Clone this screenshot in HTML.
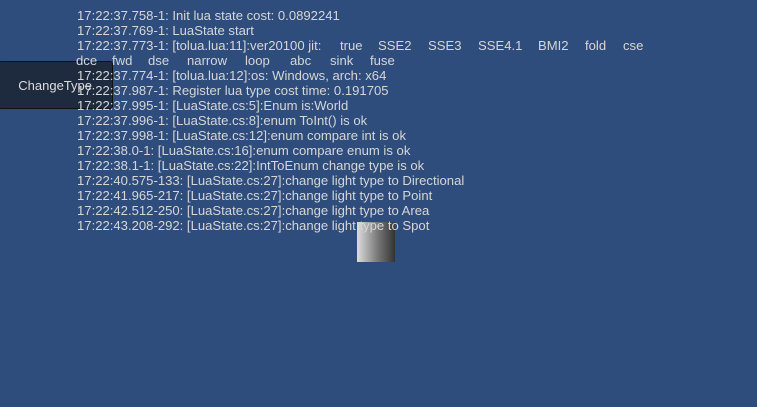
<!DOCTYPE html>
<html><head><style>
body{margin:0;width:757px;height:407px;background:#2e4d7c;overflow:hidden;position:relative;font-family:"Liberation Sans",sans-serif;}
.btn{position:absolute;left:-2px;top:61px;width:115px;height:48px;background:rgba(25,30,40,0.72);border:1px solid #111;border-radius:3px;color:#ddd;font-size:13px;line-height:48px;text-align:right;box-sizing:border-box;padding-right:20px}
.cube{position:absolute;left:357px;top:222px;width:38px;height:40px;background:linear-gradient(90deg,#ddd,#777 55%,#333)}
.log{position:absolute;left:77px;top:8px;color:#d6d6d6;font-size:13.1px;line-height:15px;white-space:pre}
.w{position:absolute;color:#d6d6d6;font-size:13.1px;line-height:15px}
</style></head><body>
<div class="btn">ChangeType</div>
<div class="cube"></div>
<div class="log">17:22:37.758-1: Init lua state cost: 0.0892241
17:22:37.769-1: LuaState start
17:22:37.773-1: [tolua.lua:11]:ver20100 jit:

17:22:37.774-1: [tolua.lua:12]:os: Windows, arch: x64
17:22:37.987-1: Register lua type cost time: 0.191705
17:22:37.995-1: [LuaState.cs:5]:Enum is:World
17:22:37.996-1: [LuaState.cs:8]:enum ToInt() is ok
17:22:37.998-1: [LuaState.cs:12]:enum compare int is ok
17:22:38.0-1: [LuaState.cs:16]:enum compare enum is ok
17:22:38.1-1: [LuaState.cs:22]:IntToEnum change type is ok
17:22:40.575-133: [LuaState.cs:27]:change light type to Directional
17:22:41.965-217: [LuaState.cs:27]:change light type to Point
17:22:42.512-250: [LuaState.cs:27]:change light type to Area
17:22:43.208-292: [LuaState.cs:27]:change light type to Spot</div>
<span class="w" style="left:340px;top:38px">true</span>
<span class="w" style="left:378px;top:38px">SSE2</span>
<span class="w" style="left:428px;top:38px">SSE3</span>
<span class="w" style="left:478px;top:38px">SSE4.1</span>
<span class="w" style="left:538px;top:38px">BMI2</span>
<span class="w" style="left:585px;top:38px">fold</span>
<span class="w" style="left:623px;top:38px">cse</span>
<span class="w" style="left:76px;top:53px">dce</span>
<span class="w" style="left:112px;top:53px">fwd</span>
<span class="w" style="left:148px;top:53px">dse</span>
<span class="w" style="left:187px;top:53px">narrow</span>
<span class="w" style="left:245px;top:53px">loop</span>
<span class="w" style="left:290px;top:53px">abc</span>
<span class="w" style="left:330px;top:53px">sink</span>
<span class="w" style="left:370px;top:53px">fuse</span>
</body></html>
